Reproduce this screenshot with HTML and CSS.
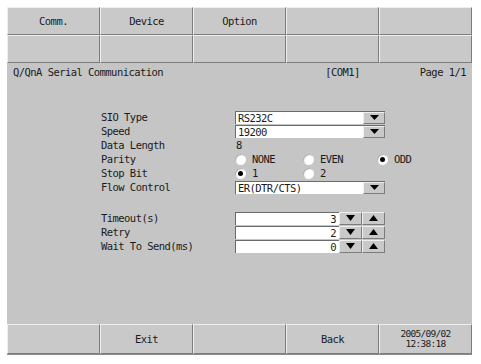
FILE: index.html
```html
<!DOCTYPE html>
<html>
<head>
<meta charset="utf-8">
<link rel="stylesheet" href="styles.css">
</head>
<body>
<div class="screen">
  <div class="tabs">
    <div class="btn">Comm.</div>
    <div class="btn">Device</div>
    <div class="btn">Option</div>
    <div class="btn"></div>
    <div class="btn"></div>
    <div class="btn"></div>
    <div class="btn"></div>
    <div class="btn"></div>
    <div class="btn"></div>
    <div class="btn"></div>
  </div>
  <div class="info">
    <span class="title">Q/QnA Serial Communication</span>
    <span class="com">[COM1]</span>
    <span class="page">Page 1/1</span>
  </div>
  <div class="form">
    <div class="row"><span class="label">SIO Type</span>
      <div class="select"><span class="val">RS232C</span><span class="arrow"><svg width="9" height="5" viewBox="0 0 9 5"><path d="M0 0H9L4.5 5Z"/></svg></span></div></div>
    <div class="row"><span class="label">Speed</span>
      <div class="select"><span class="val">19200</span><span class="arrow"><svg width="9" height="5" viewBox="0 0 9 5"><path d="M0 0H9L4.5 5Z"/></svg></span></div></div>
    <div class="row"><span class="label">Data Length</span><span class="plain">8</span></div>
    <div class="row"><span class="label">Parity</span>
      <div class="radios">
        <span class="opt w1"><span class="radio"></span>NONE</span>
        <span class="opt w2"><span class="radio"></span>EVEN</span>
        <span class="opt"><span class="radio on"></span>ODD</span>
      </div></div>
    <div class="row"><span class="label">Stop Bit</span>
      <div class="radios">
        <span class="opt w1"><span class="radio on"></span>1</span>
        <span class="opt"><span class="radio"></span>2</span>
      </div></div>
    <div class="row"><span class="label">Flow Control</span>
      <div class="select"><span class="val">ER(DTR/CTS)</span><span class="arrow"><svg width="9" height="5" viewBox="0 0 9 5"><path d="M0 0H9L4.5 5Z"/></svg></span></div></div>
    <div class="gap"></div>
    <div class="row"><span class="label">Timeout(s)</span>
      <div class="spin"><span class="num">3</span><span class="sbtn"><svg width="9" height="6" viewBox="0 0 9 6"><path d="M0 0H9L4.5 6Z"/></svg></span><span class="sbtn"><svg width="9" height="6" viewBox="0 0 9 6"><path d="M0 6H9L4.5 0Z"/></svg></span></div></div>
    <div class="row"><span class="label">Retry</span>
      <div class="spin"><span class="num">2</span><span class="sbtn"><svg width="9" height="6" viewBox="0 0 9 6"><path d="M0 0H9L4.5 6Z"/></svg></span><span class="sbtn"><svg width="9" height="6" viewBox="0 0 9 6"><path d="M0 6H9L4.5 0Z"/></svg></span></div></div>
    <div class="row"><span class="label">Wait To Send(ms)</span>
      <div class="spin"><span class="num">0</span><span class="sbtn"><svg width="9" height="6" viewBox="0 0 9 6"><path d="M0 0H9L4.5 6Z"/></svg></span><span class="sbtn"><svg width="9" height="6" viewBox="0 0 9 6"><path d="M0 6H9L4.5 0Z"/></svg></span></div></div>
  </div>
  <div class="bottom">
    <div class="btn"></div>
    <div class="btn">Exit</div>
    <div class="btn"></div>
    <div class="btn">Back</div>
    <div class="btn date"><span>2005/09/02</span><span>12:38:18</span></div>
  </div>
</div>
</body>
</html>
```
FILE: styles.css
```css
html, body {
  margin: 0;
  padding: 0;
  background: #ffffff;
}
body {
  font-family: "DejaVu Sans Mono", "Liberation Mono", monospace;
  font-size: 10.5px;
  letter-spacing: -0.55px;
  color: #1a1a1a;
}
.screen {
  width: 465px;
  height: 348px;
  margin: 7px 0 0 7px;
  background: #c5c5c5;
  display: flex;
  flex-direction: column;
  border-bottom: 1px solid #8a8a8a;
  box-sizing: border-box;
}
.tabs {
  display: grid;
  grid-template-columns: 93px 93px 93px 93px 93px;
  grid-auto-rows: 28px;
}
.btn {
  box-sizing: border-box;
  border: 1px solid;
  border-color: #efefef #7c7c7c #7c7c7c #efefef;
  background: #c9c9c9;
  display: flex;
  align-items: center;
  justify-content: center;
  line-height: 11px;
}
.info {
  display: flex;
  align-items: center;
  height: 17px;
  padding: 0 6px;
}
.title { flex: 1; }
.com { margin-right: 60px; }
.form {
  margin-top: 30px;
  padding-left: 94px;
  display: flex;
  flex-direction: column;
}
.row {
  display: flex;
  align-items: center;
  height: 14px;
}
.label {
  width: 134px;
  flex: none;
}
.plain { padding-left: 1px; }
.select {
  width: 150px;
  height: 13px;
  box-sizing: border-box;
  background: #ffffff;
  border-top: 1px solid #6a6a6a;
  border-left: 1px solid #6a6a6a;
  display: flex;
  align-items: center;
}
.val { flex: 1; padding-left: 2px; }
.arrow {
  width: 22px;
  height: 12px;
  box-sizing: border-box;
  background: #c9c9c9;
  border: 1px solid;
  border-color: #efefef #7c7c7c #7c7c7c #efefef;
  display: flex;
  align-items: center;
  justify-content: center;
}
.radios { display: flex; align-items: center; }
.opt { display: flex; align-items: center; }
.w1 { width: 68px; }
.w2 { width: 74px; }
.radio {
  width: 11px;
  height: 11px;
  border-radius: 50%;
  background: #ffffff;
  box-shadow: inset 1px 1px 1px #a8a8a8;
  margin-right: 6px;
  display: flex;
  align-items: center;
  justify-content: center;
}
.radio.on::after {
  content: "";
  width: 5px;
  height: 5px;
  border-radius: 50%;
  background: #000;
}
.gap { height: 17px; }
.spin {
  width: 150px;
  height: 13px;
  display: flex;
  align-items: center;
}
.num {
  width: 104px;
  height: 13px;
  box-sizing: border-box;
  background: #ffffff;
  border-top: 1px solid #6a6a6a;
  border-left: 1px solid #6a6a6a;
  text-align: right;
  padding-right: 3px;
  line-height: 12px;
}
.sbtn {
  width: 23px;
  height: 13px;
  box-sizing: border-box;
  background: #c9c9c9;
  border: 1px solid;
  border-color: #efefef #7c7c7c #7c7c7c #efefef;
  display: flex;
  align-items: center;
  justify-content: center;
}
.form svg path { fill: #000; }
.bottom {
  margin-top: auto;
  display: grid;
  grid-template-columns: 93px 93px 93px 93px 93px;
  height: 30px;
}
.date {
  flex-direction: column;
  font-size: 9.5px;
  letter-spacing: -0.7px;
  line-height: 10px;
}
```
